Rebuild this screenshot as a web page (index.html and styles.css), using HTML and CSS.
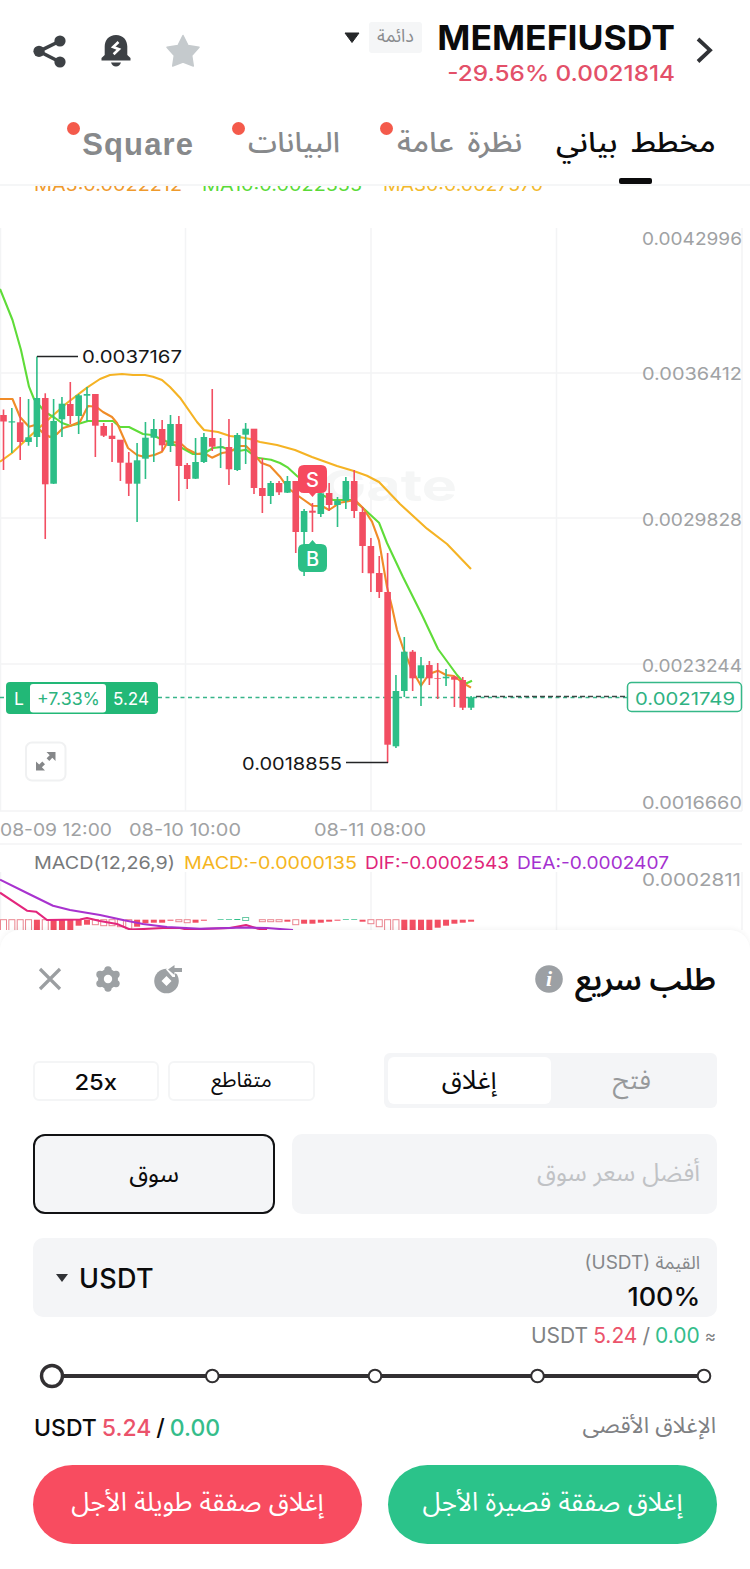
FILE: index.html
```html
<!DOCTYPE html>
<html lang="ar">
<head>
<meta charset="utf-8">
<title>MEMEFIUSDT</title>
<link rel="stylesheet" href="styles.css">
</head>
<body>
<header class="header">
  <div class="tools">
    <svg width="34" height="34" viewBox="0 0 34 34"><path d="M27 7 6 17.300 27 28" fill="none" stroke="#3d4145" stroke-width="3.600"/><g fill="#3d4145"><circle cx="27" cy="7" r="5.600"/><circle cx="6" cy="17.300" r="5.600"/><circle cx="27" cy="28" r="5.600"/></g></svg>
    <svg width="30" height="34" viewBox="0 0 30 34"><path d="M15 1C8 1 3.700 6 3.700 12.500V21L.5 24v2.500h29V24l-3.200-3V12.500C26.300 6 22 1 15 1zM10 28.500h10c-1 2.700-2.500 4-5 4s-4-1.300-5-4z" fill="#3d4145"/><path d="m17.500 8-5.300 5 5.700 2.200-5.300 5" fill="none" stroke="#fff" stroke-width="2.600"/></svg>
    <svg width="36" height="34" viewBox="0 0 36 34"><path d="M18 1.500 23 11.500 34 13.300 26.700 21.500 28.300 32 18 28 7.700 32 9.300 21.500 2 13.300 13 11.500z" fill="#c5cacd" stroke="#c5cacd" stroke-width="1.500" stroke-linejoin="round"/></svg>
  </div>
  <div class="pair">
    <svg class="caret" width="16" height="12" viewBox="0 0 16 12"><path d="M1 1h14L8 10.500z" fill="#252729" stroke="#252729" stroke-linejoin="round"/></svg>
    <span class="badge" dir="rtl">دائمة</span>
    <div class="quote"><h1 class="symbol">MEMEFIUSDT</h1><div class="change"><span>-29.56%</span> <span>0.0021814</span></div></div>
    <svg class="next" width="20" height="28" viewBox="0 0 20 28"><path d="m3 3 12 11.200L3 25.500" fill="none" stroke="#303236" stroke-width="3.800"/></svg>
  </div>
</header>
<nav class="tabs" dir="rtl">
  <a class="tab tab-active"><span>مخطط بياني</span></a>
  <a class="tab tab-overview"><span>نظرة عامة</span><i class="dot"></i></a>
  <a class="tab tab-data"><span>البيانات</span><i class="dot"></i></a>
  <a class="tab tab-square">Square<i class="dot"></i></a>
</nav>
<main class="chart">
<svg class="plot" width="750" height="744" viewBox="0 186 750 744">
  <g class="grid"><path d="M.5 228V811M185.500 228V811M371 228V811M556.500 228V811M742 228V811M0 373H742M0 518H742M0 664H742M0 811H742M0 844H742M.5 872V930M185.500 872V930M371 872V930M556.500 872V930M742 872V930"/></g>
  <text class="mark" x="322" y="501" textLength="135" lengthAdjust="spacingAndGlyphs">Gate</text>
  <g class="num">
    <text x="34" y="191" textLength="148" lengthAdjust="spacingAndGlyphs" fill="#ef9a2d">MA5:0.0022212</text>
    <text x="202" y="191" textLength="160" lengthAdjust="spacingAndGlyphs" fill="#5ada38">MA10:0.0022555</text>
    <text x="383" y="191" textLength="160" lengthAdjust="spacingAndGlyphs" fill="#f2b92c">MA30:0.0027570</text>
  </g>
  <g class="lines">
    <path stroke="#f5b324" d="M0 461.700 12 453 28 438 50 418 67 403 87 387.700 100 379 110 375 122 374 133 375 145 375 153 376.700 162 380 170 387 180 397.700 197 422 204 430 218 432 230 436 242 437.500 250 439 260 442 277 445 295 450 312 457 337 466 353 470.700 367 475.700 379 482 400 504 427 528.700 447 544 471 569"/>
    <path stroke="#5fdc39" d="M0 289 12.500 320 21 350 29 386.700 34 399 45 412 55 418 62 423 70 425.700 78 424 88 421 113 421 120 427 129 427 143 434 152 435 170 443 182 448 193 454 203 454 213 448 222 447 230 450 240 450.700 246 449.700 257 457.700 271 459.700 280 463 288 467.700 297 476 322 495 333 500 353 500 363 508 379 522.700 387 543 403 577 422 615 438 649 457 675 465 684 472 680.700"/>
    <path stroke="#f08c28" d="M0 399 12.500 399 20 417 29 426.700 35 425 43 433 50 437 57 434 63 428 70 426 80 421.700 88 406 96 406.700 103 412 112 417 117 423 128 448 137 455 145 457 155 454.700 162 451.700 168 441.700 180 442.700 187 449 197 454 204 453 212 457.700 222 453 230 451.700 240 446 246 446 252 451.700 261 462.700 270 466 280 476.700 288 488 297 495 312 505.700 322 506 329 510 340 502.700 355 500 363 508 372 521.700 379 540.700 387 587 392 607 397 630 403 648 412 670 421 685.700 429 674 438 670.700 446 675 454 676 463 683 471 687.700"/>
  </g>
  <path class="cost" d="M0 697.500H6M158 697.500H627"/>
  <path class="last" d="M476 696.500H627"/>
  <g id="candles"></g>
  <g id="histogram"></g>
  <g class="lines">
    <path stroke="#e3267c" d="M0 892.700 27 910.700 36 911.700 47 920 80 919.500 87 918 100 921 117 924 130 929.500 143 929 163 928 180 928 187 929.500 230 928 246 925 258 928.700 267 930"/>
    <path stroke="#a832cf" d="M0 879.700 27 893 53 905.700 70 910 100 915 123 920 143 924 167 927 200 928.700 246 927.500 267 928 293 930"/>
  </g>
  <path class="leader" d="M37 356.500H78M346 762.500H388"/>
  <g class="num num-dark"><text x="82" y="362.500" textLength="100" lengthAdjust="spacingAndGlyphs">0.0037167</text><text x="242" y="769.500" textLength="100" lengthAdjust="spacingAndGlyphs">0.0018855</text></g>
  <g class="num num-axis">
    <text x="642" y="244.700" textLength="100" lengthAdjust="spacingAndGlyphs">0.0042996</text>
    <text x="642" y="379.500" textLength="100" lengthAdjust="spacingAndGlyphs">0.0036412</text>
    <text x="642" y="525.500" textLength="100" lengthAdjust="spacingAndGlyphs">0.0029828</text>
    <text x="642" y="671.500" textLength="100" lengthAdjust="spacingAndGlyphs">0.0023244</text>
    <text x="642" y="808.700" textLength="100" lengthAdjust="spacingAndGlyphs">0.0016660</text>
    <text x="642" y="885.700" textLength="99" lengthAdjust="spacingAndGlyphs">0.0002811</text>
    <text x="0" y="836" textLength="112" lengthAdjust="spacingAndGlyphs">08-09 12:00</text>
    <text x="129" y="836" textLength="112" lengthAdjust="spacingAndGlyphs">08-10 10:00</text>
    <text x="314" y="836" textLength="112" lengthAdjust="spacingAndGlyphs">08-11 08:00</text>
  </g>
  <g class="num">
    <text x="34" y="868.500" textLength="141" lengthAdjust="spacingAndGlyphs" fill="#77797b">MACD(12,26,9)</text>
    <text x="184" y="868.500" textLength="173" lengthAdjust="spacingAndGlyphs" fill="#f5b51e">MACD:-0.0000135</text>
    <text x="365" y="868.500" textLength="144" lengthAdjust="spacingAndGlyphs" fill="#e0257a">DIF:-0.0002543</text>
    <text x="517" y="868.500" textLength="152" lengthAdjust="spacingAndGlyphs" fill="#a531d0">DEA:-0.0002407</text>
  </g>
  <g class="trade">
    <path fill="#f64a5f" d="M304 465h17q6 0 6 6v16q0 6-6 6h-5l-3.500 4-3.500-4h-5q-6 0-6-6v-16q0-6 6-6z"/>
    <path fill="#2cbf86" d="M304 544h5l3.500-4 3.500 4h5q6 0 6 6v16q0 6-6 6h-17q-6 0-6-6v-16q0-6 6-6z"/>
    <text x="312.500" y="486.500">S</text><text x="312.500" y="566">B</text>
  </g>
  <g><rect x="6" y="682" width="152" height="32" rx="4" fill="#22b877"/><rect x="30" y="684" width="76" height="28.500" rx="3" fill="#fff"/></g>
  <g class="num"><text x="14" y="705" fill="#fff">L</text><text x="37" y="705" textLength="63" lengthAdjust="spacingAndGlyphs" fill="#2cb37e">+7.33%</text><text x="113" y="705" textLength="36" lengthAdjust="spacingAndGlyphs" fill="#fff">5.24</text></g>
  <rect x="627.500" y="682.500" width="114" height="29" rx="4" fill="#fff" stroke="#35b888" stroke-width="1.500"/>
  <g class="num"><text x="635" y="704.500" textLength="100" lengthAdjust="spacingAndGlyphs" fill="#2fb282">0.0021749</text></g>
  <rect x="26" y="742.500" width="39.500" height="38" rx="6" fill="#fff" stroke="#f0f1f2" stroke-width="2"/>
  <path fill="#858789" d="M46.500 752H55.500V761L52.300 757.800 49.300 761 46.600 758.300 49.700 755.200zM36 761.500 39.200 764.600 42.300 761.500 45 764.200 41.900 767.300 45 770.500H36z"/>
</svg>
</main>
<section class="sheet">
  <div class="sheet-head">
    <div class="sheet-tools">
      <svg width="24" height="24" viewBox="0 0 24 24"><path d="M2 2 22 22M22 2 2 22" stroke="#9b9ea1" stroke-width="3.200"/></svg>
      <svg width="26" height="28" viewBox="0 0 26 28"><g fill="#9da1a4"><circle cx="13" cy="14" r="10"/><circle cx="13" cy="4.900" r="3.700"/><circle cx="21" cy="9.400" r="3.700"/><circle cx="21" cy="18.600" r="3.700"/><circle cx="13" cy="23.100" r="3.700"/><circle cx="5" cy="18.600" r="3.700"/><circle cx="5" cy="9.400" r="3.700"/></g><circle cx="13" cy="14" r="4.200" fill="#fff"/></svg>
      <svg width="30" height="30" viewBox="0 0 30 30"><circle cx="12.500" cy="17" r="12.300" fill="#9da1a4"/><path fill="#fff" d="m12.500 12 5 5-5 5-5-5zM12 5.500 19-1h11v10.500h-9V13l-2.500 0z"/><path fill="#9da1a4" d="m14 5.500 6.500-4.500v3H28v4h-7.500v3z"/></svg>
    </div>
    <div class="title"><svg width="28" height="28" viewBox="0 0 28 28"><circle cx="14" cy="14" r="13.800" fill="#9ca0a4"/><text class="info" x="14" y="21">i</text></svg><h2 class="heading" dir="rtl">طلب سريع</h2></div>
  </div>
  <div class="modes">
    <div class="chips"><span class="chip chip-lev"><span class="wide">25x</span></span><span class="chip chip-cross" dir="rtl">متقاطع</span></div>
    <div class="segment"><span class="seg seg-on" dir="rtl">إغلاق</span><span class="seg" dir="rtl">فتح</span></div>
  </div>
  <div class="price"><div class="market" dir="rtl">سوق</div><div class="best" dir="rtl">أفضل سعر سوق</div></div>
  <div class="amount">
    <div class="unit"><svg width="12" height="9" viewBox="0 0 12 9"><path d="M0 0h12L6 8z" fill="#303236"/></svg><span>USDT</span></div>
    <div class="value"><div class="value-label"><span>(USDT)</span> <span class="value-ar" dir="rtl">القيمة</span></div><div class="percent">100%</div></div>
  </div>
  <div class="approx"><span class="muted">USDT</span><span class="red">5.24</span><span class="muted">/</span><span class="green">0.00</span><span class="muted sign">≈</span></div>
  <svg class="slider" width="684" height="30" viewBox="33 1361 684 30"><path d="M52 1376H704" stroke="#323032" stroke-width="4.200"/><g fill="#fff" stroke="#323032" stroke-width="2"><circle cx="52" cy="1376" r="10.500" stroke-width="3.400"/><circle cx="212.300" cy="1376" r="6.300"/><circle cx="375" cy="1376" r="6.300"/><circle cx="537.500" cy="1376" r="6.300"/><circle cx="704" cy="1376" r="6.300"/></g></svg>
  <div class="max"><div class="max-value"><span>USDT</span><span class="red">5.24</span><span>/</span><span class="green">0.00</span></div><span class="max-label" dir="rtl">الإغلاق الأقصى</span></div>
  <div class="actions"><button class="btn btn-long" dir="rtl">إغلاق صفقة طويلة الأجل</button><button class="btn btn-short" dir="rtl">إغلاق صفقة قصيرة الأجل</button></div>
</section>
<script src="chart.js"></script>
</body>
</html>
```
FILE: styles.css
```css
* { box-sizing: border-box; }
body { margin: 0; width: 750px; height: 1569px; overflow: hidden; background: #fff; color: #0b0b0c; font-family: Inter, "Noto Sans Arabic", "Noto Sans", "DejaVu Sans", sans-serif; }
h1, h2 { margin: 0; }
svg { display: block; flex: none; }
span, a, h1, h2, button { white-space: nowrap; }
.header { display: flex; justify-content: space-between; height: 105px; padding: 0 35px 0 33px; }
.tools { display: flex; gap: 34px; padding-top: 34px; }
.pair { display: flex; align-items: flex-start; }
.caret { margin: 32px 9px 0 0; }
.badge { width: 53px; height: 31px; margin-top: 22px; background: #f5f6f7; color: #8a8c8f; font-size: 18px; line-height: 28px; text-align: center; border-radius: 3px; }
.quote { width: 240px; margin-left: 14px; padding-top: 17px; text-align: right; }
.symbol { font-size: 34px; line-height: 41px; font-weight: 700; transform: scaleX(1.045); transform-origin: right; }
.change { font-size: 21.5px; line-height: 31px; color: #e35069; font-weight: 500; transform: scaleX(1.13); transform-origin: right; }
.quote > * { margin-right: 1px; }
.next { margin: 36px 0 0 19px; }
.tabs { position: relative; display: flex; height: 81px; padding: 0 34px 0 0; border-bottom: 2px solid #f5f6f7; font-size: 28px; word-spacing: 5px; color: #87898b; }
.tab { position: relative; line-height: 74px; font-weight: 500; }
.tab span { display: inline-block; transform-origin: right; }
.tab-active { width: 160px; color: #0b0b0c; }
.tab-active span { transform: scaleX(1.096); }
.tab-active::after { content: ""; position: absolute; left: 63px; top: 73px; width: 33px; height: 6px; border-radius: 2px; background: #0b0b0c; }
.tab-overview { width: 126px; margin-right: 34px; }
.tab-overview span { transform: scaleX(1.086); }
.tab-data { width: 92px; margin-right: 56px; }
.tab-data span { transform: scaleX(1.045); }
.tab-square { width: 111px; margin-right: 54px; font: 700 31px/80px "Liberation Sans", sans-serif; letter-spacing: 1.1px; }
.dot { position: absolute; left: -16px; top: 17px; width: 13px; height: 13px; border-radius: 50%; background: #f45a4b; }
.chart { height: 744px; }
.grid path { fill: none; stroke: #f3f4f5; stroke-width: 1.500; }
.mark { font-size: 43px; font-weight: 700; fill: #f5f6f6; }
.num text { font-size: 17.500px; }
.num-dark { fill: #161718; }
.num-axis { fill: #a0a2a4; }
.lines path { fill: none; stroke-width: 2.100; stroke-linejoin: round; }
.leader { stroke: #232426; stroke-width: 1.500; }
.cost { stroke: #38b58a; stroke-width: 1.500; stroke-dasharray: 4 3.500; }
.last { stroke: #3c4644; stroke-width: 1.500; stroke-dasharray: 5 3; }
.trade text { fill: #fff; font-size: 20px; font-weight: 500; text-anchor: middle; }
.up { fill: #2dbe87; stroke: none; }
.down { fill: #f24e62; stroke: none; }
.bar-hollow { fill: #fff; stroke: #ea8590; stroke-width: 1; }
.bar-hollow-up { fill: #fff; stroke: #69c9a4; stroke-width: 1; }
.sheet { position: relative; height: 639px; padding: 0 33px; background: #fff; border-radius: 20px 20px 0 0; box-shadow: 0 -2px 5px rgba(0, 0, 0, .04); }
.sheet-head { display: flex; justify-content: space-between; align-items: flex-start; height: 123px; padding-top: 34px; }
.sheet-tools { display: flex; gap: 33px; align-items: center; padding-left: 5px; }
.title { display: flex; align-items: center; gap: 12px; height: 30px; padding-right: 1px; }
.info { fill: #fff; font: italic 700 22px "Liberation Serif", serif; text-anchor: middle; }
.heading { font-size: 30.700px; line-height: 30px; font-weight: 600; }
.modes { display: flex; justify-content: space-between; align-items: center; height: 55px; }
.chips { display: flex; gap: 9px; }
.chip { height: 40px; border: 2px solid #f4f5f6; border-radius: 6px; text-align: center; line-height: 38px; }
.chip-lev { width: 126px; font-size: 22px; font-weight: 500; }
.wide { display: inline-block; transform: scaleX(1.08); }
.chip-cross { width: 147px; font-size: 21px; line-height: 34px; }
.segment { display: flex; width: 333px; height: 55px; padding: 4px; background: #f4f5f7; border-radius: 6px; }
.seg { flex: 1; text-align: center; font-size: 26px; line-height: 45px; color: #97999b; }
.seg-on { background: #fff; color: #0b0b0c; border-radius: 6px; }
.price { display: flex; gap: 17px; margin-top: 26px; height: 80px; }
.market { width: 242px; border: 2px solid #111214; border-radius: 12px; background: #f4f5f7; text-align: center; font-size: 24.500px; line-height: 74px; }
.best { flex: 1; background: #f4f5f7; border-radius: 10px; padding-right: 17px; font-size: 24.500px; line-height: 76px; color: #c0c2c5; }
.amount { display: flex; justify-content: space-between; margin-top: 24px; height: 79px; padding: 0 17px 0 23px; background: #f4f5f7; border-radius: 10px; }
.unit { display: flex; align-items: center; gap: 11px; padding-top: 2px; font-size: 27px; font-weight: 500; }
.unit span { letter-spacing: .3px; }
.value { padding-top: 10px; text-align: right; }
.value-label { height: 28px; font-size: 19px; line-height: 28px; color: #85878a; }
.value-ar { font-size: 18.300px; }
.percent { font-size: 25.500px; line-height: 41px; font-weight: 500; transform: scaleX(1.06); transform-origin: right; }
.approx { display: flex; justify-content: flex-end; gap: 5px; height: 38px; padding-right: 1px; font-size: 21px; line-height: 38px; }
.muted { color: #808284; }
.sign { font-size: 17px; }
.red { color: #eb536b; }
.green { color: #35bd8b; }
.slider { margin-top: 6px; }
.max { display: flex; justify-content: space-between; margin-top: 16px; height: 40px; line-height: 42px; }
.max-value { display: flex; gap: 5px; padding-left: 1px; font-size: 23px; font-weight: 500; }
.max-label { padding-right: 1px; font-size: 22.500px; line-height: 36px; color: #7e8083; }
.actions { display: flex; gap: 26px; margin-top: 18px; }
.btn { flex: 1; height: 79px; border: 0; border-radius: 40px; padding: 0 0 4px; color: #fff; font: 400 26px Inter, "Noto Sans Arabic", "Noto Sans", "DejaVu Sans", sans-serif; }
.btn-long { background: #f84c60; }
.btn-short { background: #2bc38a; }
```
FILE: chart.js
```js
// Each candle: direction, body top, body bottom, high, low
const candles = `r 415 421.500 409.500 470|g 421.300 422.500 408 453|r 422.300 442 397 460|g 437.300 442 399 445.700|g 398 437 356.500 447|r 398 484.300 393.300 539|g 421 483.700 399 484|g 403.700 419.300 397 437|r 404 416 382 424|g 395.300 416 394 434|g 394 395.700 387 421|r 394 425.700 394 457|r 426 435.700 423 437|r 435.700 439 423 462|r 439.700 462.700 440 481|r 462.700 483.700 452 496|g 460.300 483.700 443 522|g 437.700 458.700 422 479|g 429 437.700 419 462|r 429 445.300 420 451|g 424 446 415 452|r 424 466 416 501|r 465 479 463 489|g 462 478.700 438 479|g 437 462 433 463|r 438 446.700 389 451|g 446.700 447.700 438 468|r 447 469.300 419 485|g 435 470 433 471|g 428.700 434.700 423 464|r 428.700 488 429 494|r 488 496 458 513|g 483 496 481 504|r 483 492.300 481 495|g 481 492.700 476 493|r 481 532 481 553|g 511 532 509 576|r 510.700 512.700 503 532|g 493.300 514 493 517|r 493 505 483 511|g 500.700 505 497 527|g 481 500.700 477 509|r 481 511 470 518|r 512 546 507 573|r 546 573.300 538 592|r 573 592 556 598|r 592 744.700 553 763|g 691 746.300 675 748|g 651.700 691 637 697|r 651.700 678.300 650 691|g 665.300 678.300 657 706|r 665 678.300 661 685|r 678 678.700 663 699|g 676.700 678.300 669 686|r 676.700 679.700 676 707|r 680 707.700 677 710|g 697.300 707.700 696 710`.split("|");
const ns = "http://www.w3.org/2000/svg";
const step = 8.35, first = 3.5;
function rect(parent, x, y, w, h, cls) {
  const el = document.createElementNS(ns, "rect");
  el.setAttribute("x", x); el.setAttribute("y", y);
  el.setAttribute("width", w); el.setAttribute("height", h);
  el.setAttribute("class", cls);
  parent.appendChild(el);
}
const plot = document.getElementById("candles");
candles.forEach((row, i) => {
  const [side, top, bottom, high, low] = row.split(" ");
  const x = first + i * step, cls = side === "g" ? "up" : "down";
  rect(plot, x - 0.8, +high, 1.6, low - high, cls);
  rect(plot, x - 3.3, +top, 6.6, bottom - top, cls);
});
// MACD bars: h = hollow, f = filled, g = rising, o = rising hollow; followed by height
const bars = "h14 h16 h12 h12 f12 h12 f12 f12 f12 f6 f5 h5 h6 h6 h7 h9 f7 f3.500 f3 f3 f1 h2 h3 f3 f1 f0 g.7 g.7 g1 o3 f0 h2 h2 h2 f2 h5 f4 f4 f3 f2 f1 g.7 g.7 f2 h4 h7 h12 h12 f12 f12 f12 f12 f8 f6 f4 f3 f2".split(" ");
const hist = document.getElementById("histogram");
bars.forEach((bar, i) => {
  const kind = bar[0], h = +bar.slice(1), x = first + i * step;
  if (!h) return;
  const cls = { h: "bar-hollow", f: "down", g: "up", o: "bar-hollow-up" }[kind];
  rect(hist, x - 3, kind === "o" ? 917.5 : kind === "g" ? 919 : 919.7, 6, h, cls);
});
```
